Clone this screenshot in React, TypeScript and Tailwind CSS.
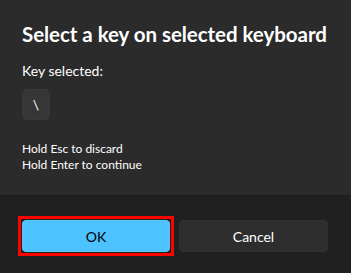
export default function App() {
  return (
    <div
      className="w-[351px] h-[273px] flex flex-col bg-[#2b2b2b] text-white overflow-hidden"
      style={{ fontFamily: 'Lato, "Noto Sans", sans-serif' }}
    >
      <div className="flex-1 px-[22px] pt-[20px]">
        <h1 className="text-[20.5px] leading-[28px] font-bold whitespace-nowrap tracking-[-0.05px]">
          Select a key on selected keyboard
        </h1>
        <p className="mt-[13px] text-[14px] leading-[20px]">Key selected:</p>
        <div className="mt-[8px] w-[28px] h-[31px] rounded-[5px] bg-[#363636] border border-[#3a3a3a] flex items-center justify-center text-[14px]">
          \
        </div>
        <div className="mt-[21px] text-[12px] leading-[16px]">
          <p>Hold Esc to discard</p>
          <p>Hold Enter to continue</p>
        </div>
      </div>
      <div className="h-[78px] bg-[#202020] border-t border-[#1c1c1c] px-[22px] pt-[24px] flex gap-[9px]">
        <div className="w-[148px] h-[32px] relative">
          <div className="absolute -inset-[4px] border-[3px] border-[#ff0000]" />
          <button className="w-full h-full rounded-[4px] bg-[#4cc2ff] border border-[#5ac8ff] text-black text-[14px]">
            OK
          </button>
        </div>
        <button className="w-[149px] h-[32px] rounded-[4px] bg-[#2d2d2d] border border-[#303030] text-white text-[14px]">
          Cancel
        </button>
      </div>
    </div>
  );
}
